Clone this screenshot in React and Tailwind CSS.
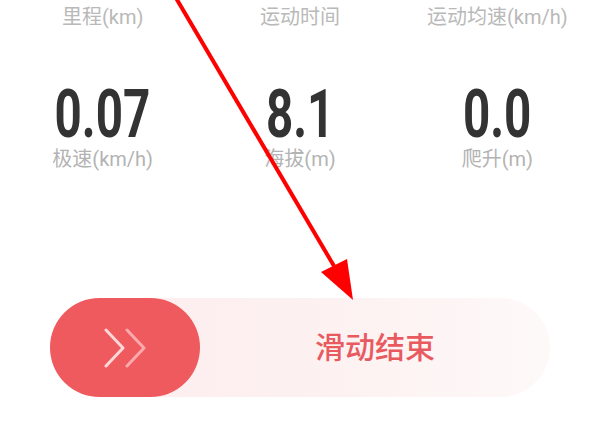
import React from 'react';

const topStats = ['里程(km)', '运动时间', '运动均速(km/h)'];

const mainStats = [
  { value: '0.07', label: '极速(km/h)' },
  { value: '8.1', label: '海拔(m)' },
  { value: '0.0', label: '爬升(m)' },
];

const cjk = { fontFamily: 'Roboto, "Noto Sans CJK SC", sans-serif' };

const App = () => {
  return (
    <div className="relative w-[600px] h-[429px] overflow-hidden bg-white" style={cjk}>
      {/* stats */}
      <div className="grid grid-cols-3 px-1 pt-[5px]">
        {topStats.map((t) => (
          <div key={t} className="text-center text-[20px] leading-6 text-[#b9b9b9]">
            {t}
          </div>
        ))}
      </div>

      <div className="grid grid-cols-3 px-1 mt-[56px]">
        {mainStats.map((s) => (
          <div key={s.label} className="flex flex-col items-center">
            <span className="inline-block scale-x-[0.71] text-[67px] leading-[58px] font-bold text-[#333333]">
              {s.value}
            </span>
            <span className="mt-[4px] text-[20px] leading-6 text-[#b3b3b3]">{s.label}</span>
          </div>
        ))}
      </div>

      {/* slide to finish */}
      <div className="ml-[50px] mt-[127px] flex h-[99px] w-[500px] items-center rounded-full bg-gradient-to-r from-[#fdeeee] via-[#fdf0f0] to-[#fef9f9]">
        <div className="flex h-full w-[150px] items-center justify-center rounded-full bg-[#ef5a5e]">
          <svg width="44" height="40" viewBox="0 0 44 40" fill="none" strokeWidth="3" strokeLinecap="round" strokeLinejoin="round">
            <path d="M3 2 L20 20 L3 38" stroke="#ffe4e4" strokeOpacity="0.9" />
            <path d="M24 2 L41 20 L24 38" stroke="#ffd6d6" strokeOpacity="0.65" />
          </svg>
        </div>
        <div className="flex-1 text-center text-[30px] font-medium text-[#e85a60] pb-[1px]">
          滑动结束
        </div>
      </div>

      {/* annotation arrow */}
      <svg className="pointer-events-none absolute left-0 top-0" width="600" height="429" viewBox="0 0 600 429">
        <line x1="176" y1="-2" x2="334" y2="266" stroke="#ff0000" strokeWidth="4" />
        <polygon points="353,300 321,272 347,259" fill="#ff0000" />
      </svg>
    </div>
  );
};

export default App;
